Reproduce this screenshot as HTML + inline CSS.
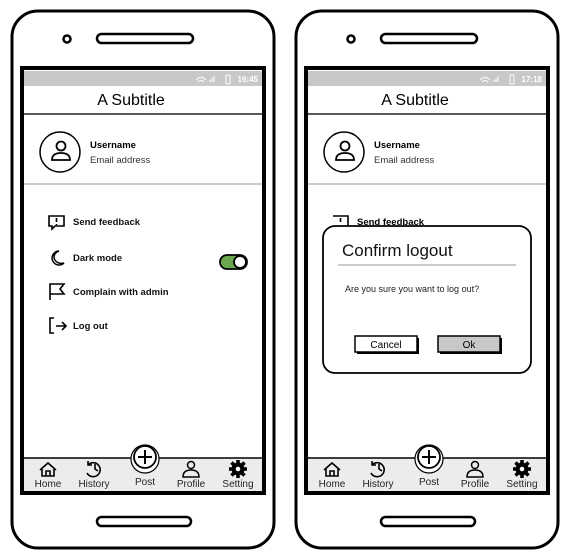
<!DOCTYPE html>
<html><head><meta charset="utf-8"><style>
html,body{margin:0;padding:0;background:#fff;}
svg{display:block;font-family:"Liberation Sans",sans-serif;}
</style></head><body>
<svg width="574" height="560" viewBox="0 0 574 560" xmlns="http://www.w3.org/2000/svg">
<defs>
<g id="phone">
  <rect x="12" y="11" width="262" height="537" rx="26" fill="#fff" stroke="#000" stroke-width="3"/>
  <circle cx="67" cy="39" r="3.5" fill="none" stroke="#000" stroke-width="2.5"/>
  <rect x="97" y="34" width="96" height="9" rx="4.5" fill="none" stroke="#000" stroke-width="2.5"/>
  <rect x="97" y="517" width="94" height="9" rx="4.5" fill="none" stroke="#000" stroke-width="2.5"/>
  <rect x="22" y="68" width="242" height="425" fill="#fff" stroke="#000" stroke-width="4"/>
  <rect x="24" y="71" width="238" height="15" fill="#c8c8c8"/>
  <text x="131" y="105" font-size="16" text-anchor="middle">A Subtitle</text>
  <line x1="24" y1="114" x2="262" y2="114" stroke="#222" stroke-width="1.5"/>
  <rect x="24" y="458" width="238" height="33" fill="#ececec"/>
  <line x1="24" y1="458" x2="262" y2="458" stroke="#000" stroke-width="1.5"/>
  <circle cx="145" cy="459" r="14" fill="#fff" stroke="#000" stroke-width="1.2"/>
  <circle cx="145" cy="457" r="11" fill="#fff" stroke="#000" stroke-width="1.8"/>
  <path d="M145 450v14M138 457h14" stroke="#000" stroke-width="2"/>
  <!-- home -->
  <path d="M40 470l8-7 8 7M42 469v7h12v-7M46 476v-5h4v5" fill="none" stroke="#000" stroke-width="1.6"/>
  <!-- history -->
  <path d="M88 465a7 7 0 1 1 -1 8M88 461v4h4M95 464v5l3 2" fill="none" stroke="#000" stroke-width="1.6"/>
  <!-- profile -->
  <circle cx="191" cy="465" r="3.5" fill="none" stroke="#000" stroke-width="1.5"/>
  <path d="M183 477q0-7 8-7t8 7z" fill="none" stroke="#000" stroke-width="1.5"/>
  <!-- setting gear -->
  <circle cx="238" cy="469" r="6.5" fill="#000"/>
  <path d="M238 460v18M229 469h18M231.5 462.5l13 13M244.5 462.5l-13 13" stroke="#000" stroke-width="3.5"/>
  <circle cx="238" cy="469" r="2.3" fill="#fff"/>
  <g font-size="10" fill="#222" text-anchor="middle">
    <text x="48" y="487">Home</text>
    <text x="94" y="487">History</text>
    <text x="145" y="485">Post</text>
    <text x="191" y="487">Profile</text>
    <text x="238" y="487">Setting</text>
  </g>
</g>
</defs>

<use href="#phone"/>
<use href="#phone" x="284"/>

<!-- left content -->
<g>
  <text x="258" y="82" font-size="8" fill="#fff" text-anchor="end" font-weight="bold">16:45</text>
  <path d="M196 80q5-5 10 0M198 82q3-3 6 0" stroke="#fff" fill="none" stroke-width="1"/>
  <path d="M210 82v-2M212 82v-4M214 82v-6" stroke="#fff" stroke-width="1"/>
  <rect x="226" y="75" width="4" height="9" rx="1" fill="none" stroke="#fff" stroke-width="1"/>
  <circle cx="60" cy="152" r="20" fill="none" stroke="#000" stroke-width="1.5"/>
  <circle cx="61" cy="146" r="4.5" fill="none" stroke="#000" stroke-width="1.8"/>
  <path d="M52 160q0-7 9-7t9 7z" fill="none" stroke="#000" stroke-width="1.8"/>
  <text x="90" y="148" font-size="9.5" font-weight="bold">Username</text>
  <text x="90" y="163" font-size="9.5" fill="#333">Email address</text>
  <line x1="24" y1="184" x2="262" y2="184" stroke="#bbb" stroke-width="1.5"/>
  <g font-size="9.5" font-weight="bold" fill="#111">
    <text x="73" y="225">Send feedback</text>
    <text x="73" y="261">Dark mode</text>
    <text x="73" y="295">Complain with admin</text>
    <text x="73" y="329">Log out</text>
  </g>
  <path d="M49 216h15v10h-9l-3 3v-3h-3z" fill="none" stroke="#000" stroke-width="1.6"/>
  <path d="M56.5 218v4M56.5 224v1" stroke="#000" stroke-width="1.6"/>
  <path d="M59 251a7 7 0 1 0 5 12a7 6 0 0 1 -5-12z" fill="none" stroke="#000" stroke-width="1.5"/>
  <path d="M50 300v-16h14l-4 5 4 5h-14" fill="none" stroke="#000" stroke-width="1.6"/>
  <path d="M54 318h-4v15h4M56 326h10M62 322l4 4-4 4" fill="none" stroke="#000" stroke-width="1.6"/>
  <rect x="220" y="255" width="27" height="14" rx="7" fill="#6aa84f" stroke="#000" stroke-width="1.8"/>
  <circle cx="240" cy="262" r="6" fill="#fff" stroke="#000" stroke-width="1.8"/>
</g>

<!-- right content -->
<g>
  <text x="542" y="82" font-size="8" fill="#fff" text-anchor="end" font-weight="bold">17:18</text>
  <path d="M480 80q5-5 10 0M482 82q3-3 6 0" stroke="#fff" fill="none" stroke-width="1"/>
  <path d="M494 82v-2M496 82v-4M498 82v-6" stroke="#fff" stroke-width="1"/>
  <rect x="510" y="75" width="4" height="9" rx="1" fill="none" stroke="#fff" stroke-width="1"/>
  <circle cx="344" cy="152" r="20" fill="none" stroke="#000" stroke-width="1.5"/>
  <circle cx="345" cy="146" r="4.5" fill="none" stroke="#000" stroke-width="1.8"/>
  <path d="M336 160q0-7 9-7t9 7z" fill="none" stroke="#000" stroke-width="1.8"/>
  <text x="374" y="148" font-size="9.5" font-weight="bold">Username</text>
  <text x="374" y="163" font-size="9.5" fill="#333">Email address</text>
  <line x1="308" y1="184" x2="546" y2="184" stroke="#bbb" stroke-width="1.5"/>
  <text x="357" y="225" font-size="9.5" font-weight="bold">Send feedback</text>
  <path d="M333 216h15v10" fill="none" stroke="#000" stroke-width="1.6"/>
  <path d="M340.5 218v4" stroke="#000" stroke-width="1.6"/>
  <rect x="323" y="226" width="208" height="147" rx="12" fill="#fff" stroke="#000" stroke-width="1.8"/>
  <text x="342" y="256" font-size="17" fill="#111">Confirm logout</text>
  <line x1="338" y1="265" x2="516" y2="265" stroke="#aaa" stroke-width="1.2"/>
  <text x="345" y="292" font-size="9" fill="#222">Are you sure you want to log out?</text>
  <rect x="355" y="336" width="62" height="16" fill="#fff" stroke="#000" stroke-width="1.5"/>
  <path d="M357 353h61v-15" fill="none" stroke="#000" stroke-width="2"/>
  <text x="386" y="348" font-size="10" text-anchor="middle">Cancel</text>
  <rect x="438" y="336" width="62" height="16" fill="#c8c8c8" stroke="#000" stroke-width="1.5"/>
  <path d="M440 353h61v-15" fill="none" stroke="#000" stroke-width="2"/>
  <text x="469" y="348" font-size="10" text-anchor="middle">Ok</text>
</g>
</svg>
</body></html>
